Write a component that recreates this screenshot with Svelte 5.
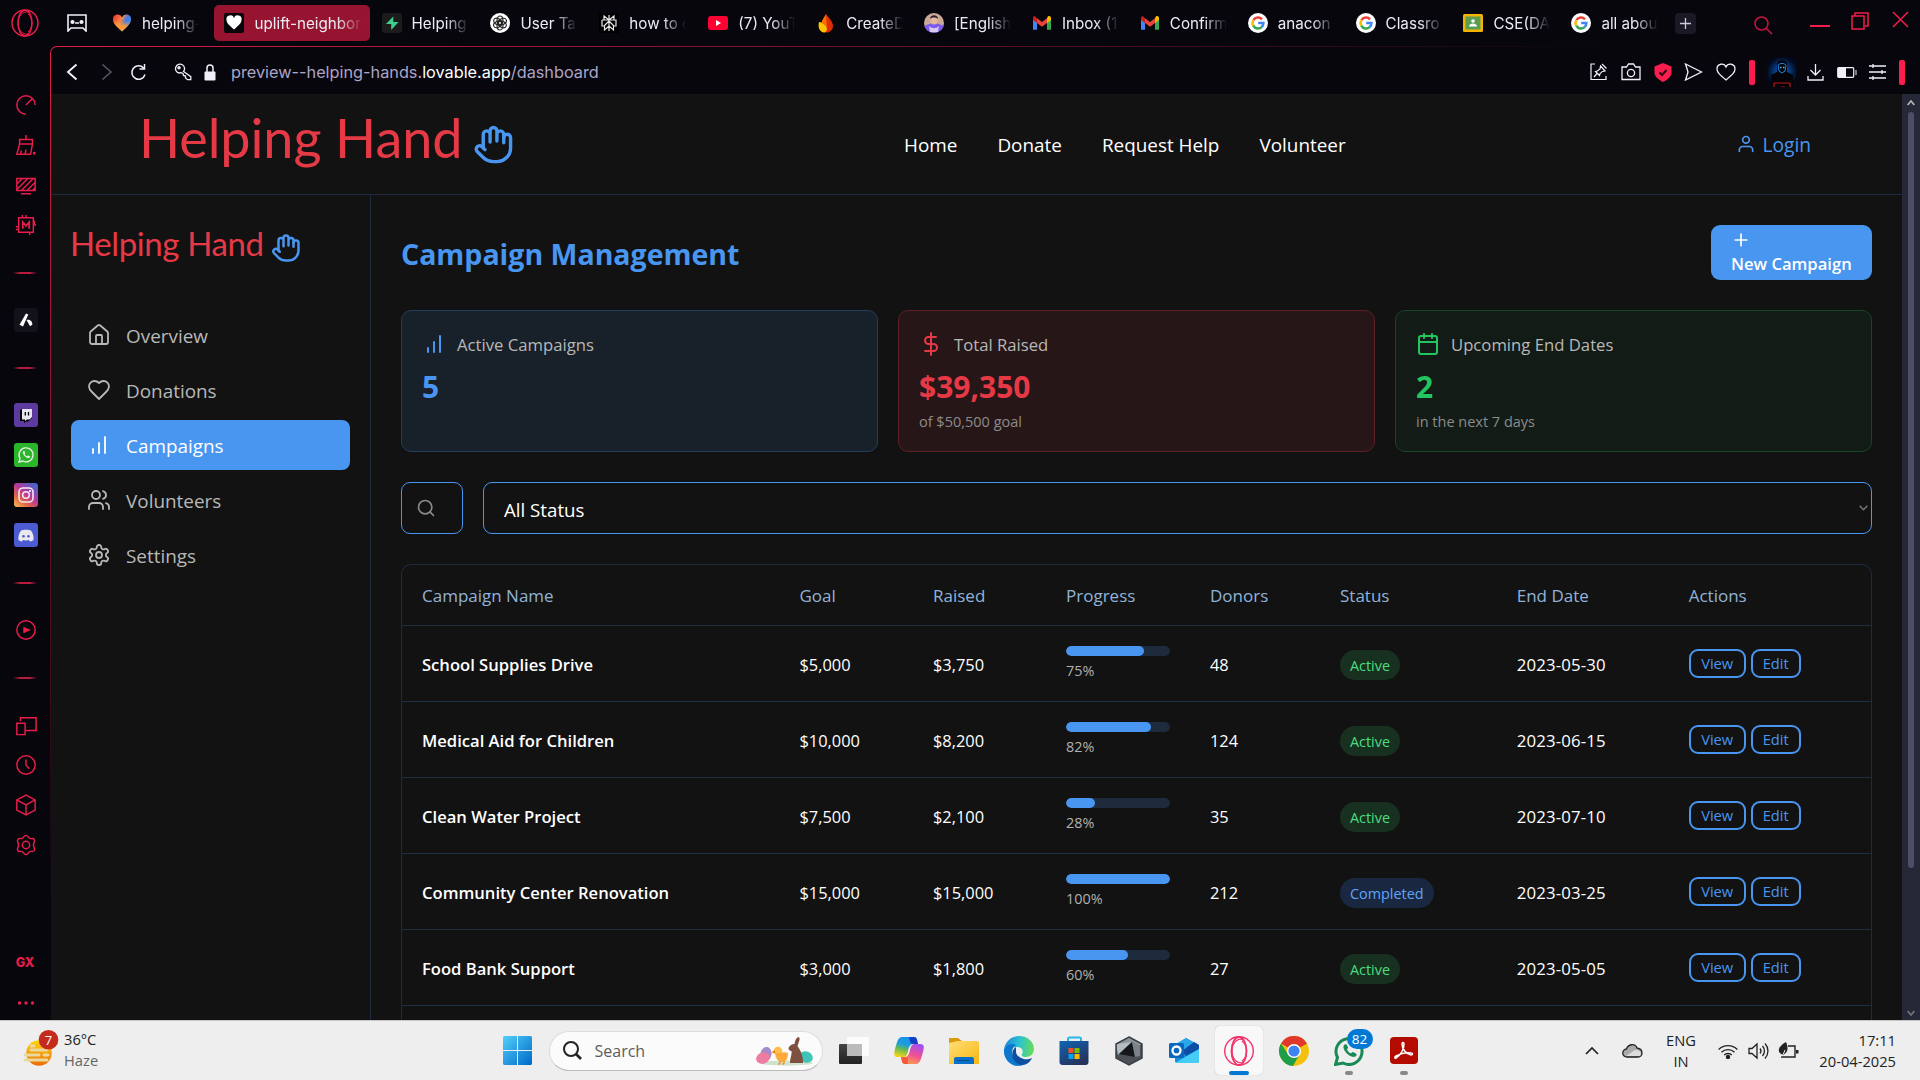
<script>
  const google = '<circle cx="10" cy="10" r="10" fill="#fff"/><g fill="none" stroke-width="2.5"><path d="M5.4 7.2A5.4 5.4 0 0 1 14 6.3" stroke="#ea4335"/><path d="M5.3 7.3a5.4 5.4 0 0 0 0 5.4" stroke="#fbbc05"/><path d="M5.3 12.6a5.4 5.4 0 0 0 8.4 1.5" stroke="#34a853"/><path d="M13.6 14.1a5.4 5.4 0 0 0 1.8-4.1H10.2" stroke="#4285f4"/></g>';
  const gmail = '<path d="M1 4.5v12.3h4V9z" fill="#4285f4"/><path d="M15 9v7.8h4V4.5z" fill="#34a853"/><path d="M15 5.2V10l4-3V5c0-2-2-2.6-3.2-1.6z" fill="#fbbc04"/><path d="M5 5.2V10l5 3.7L15 10V5.2L10 9z" fill="#ea4335"/><path d="M1 5v2l4 3V5.2l-.8-.6C3 2.4 1 3 1 5z" fill="#c5221f"/>';
  const heartPath = 'M10 18.5C4 13 1 10.300 1 6.500a4.700 4.700 0 0 1 9-2.200a4.700 4.700 0 0 1 9 2.200c0 3.800-3 6.500-9 12z';
  const tabs = [
    { name: 'helping-', svg: `<defs><linearGradient id="lv" x1="0" y1=".1" x2="1" y2=".6"><stop offset=".1" stop-color="#f0442e"/><stop offset=".45" stop-color="#f08a4b"/><stop offset=".65" stop-color="#4b7be0"/><stop offset="1" stop-color="#3d8ff0"/></linearGradient><linearGradient id="lv2" x1=".5" y1="0" x2=".4" y2="1"><stop offset=".35" stop-color="#ff9a1f" stop-opacity="0"/><stop offset=".7" stop-color="#ff9a3c"/></linearGradient></defs><path d="${heartPath}" fill="url(#lv)"/><path d="${heartPath}" fill="url(#lv2)"/>` },
    { name: 'uplift-neighbor', active: true, svg: '<rect width="20" height="20" rx="2" fill="#09050a"/><path d="M10 16.500C5 12 2.500 10 2.500 7a3.800 3.800 0 0 1 7.500-1.600a3.800 3.800 0 0 1 7.500 1.600c0 3-2.500 5-7.500 9.500z" fill="#fff"/>' },
    { name: 'Helping', svg: '<rect width="20" height="20" rx="3" fill="#1c1c1c"/><path d="M11.300 3.500v5.500h5.200l-7.300 8v-6H4z" fill="#3ecf8e"/>' },
    { name: 'User Tal', svg: '<circle cx="10" cy="10" r="10" fill="#fff"/><g fill="none" stroke="#222" stroke-width="1.100"><ellipse cx="10" cy="7.300" rx="3" ry="4.300" /><ellipse cx="10" cy="7.300" rx="3" ry="4.300" transform="rotate(60 10 10)"/><ellipse cx="10" cy="7.300" rx="3" ry="4.300" transform="rotate(120 10 10)"/><ellipse cx="10" cy="7.300" rx="3" ry="4.300" transform="rotate(180 10 10)"/><ellipse cx="10" cy="7.300" rx="3" ry="4.300" transform="rotate(240 10 10)"/><ellipse cx="10" cy="7.300" rx="3" ry="4.300" transform="rotate(300 10 10)"/></g>' },
    { name: 'how to c', svg: '<rect width="20" height="20" fill="#000"/><path d="M10 2v16M10 7L5 3v4M10 7l5-4v4M3 7h14v6h-2.500M3 7v6h2.500M10 8l-4.500 4.500V17l4.500-4l4.500 4v-4.500L10 8" fill="none" stroke="#e8e8e8" stroke-width="1.200"/>' },
    { name: '(7) YouT', svg: '<rect y="3" width="20" height="14" rx="3" fill="#ff0033"/><path d="M8 7l5 3l-5 3z" fill="#fff"/>' },
    { name: 'CreateD', svg: '<path d="M10 1c4 5 7 8 7 12a6 6 0 0 1-9 5.500C5 14 10 8 10 1z" fill="#dd2c00"/><path d="M3 9c4 0 7 3 8 7c-.5 3-2 3.500-3 3.500C4 19 1.500 15 3 9z" fill="#ffc400"/><path d="M10 1c-2 4-5 7-4 9c3 1 4.500 4 5 6z" fill="#ff6d00"/>' },
    { name: '[English', svg: '<defs><clipPath id="av"><circle cx="10" cy="10" r="10"/></clipPath></defs><g clip-path="url(#av)"><rect width="20" height="20" fill="#c9a996"/><path d="M0 14c4-5 16-5 20 0v6H0z" fill="#7c5cf0"/><ellipse cx="10" cy="7" rx="3.500" ry="4.500" fill="#e8b79b"/><path d="M6 6c0-5 8-5 8 0c-2-2-6-2-8 0z" fill="#2d2030"/><path d="M5 13c3 3 7 3 10 0l-1 6H6z" fill="#d9c8f2"/></g>' },
    { name: 'Inbox (1', svg: gmail },
    { name: 'Confirm', svg: gmail },
    { name: 'anacon', svg: google },
    { name: 'Classro', svg: google },
    { name: 'CSE(DA', svg: '<rect x="0" y="1" width="20" height="18" rx="1.500" fill="#f4b400"/><rect x="2.500" y="3.500" width="15" height="13" fill="#5b9e52"/><circle cx="10" cy="8" r="1.800" fill="#fff"/><path d="M6 13.500c0-4 8-4 8 0z" fill="#fff"/>' },
    { name: 'all abou', svg: google }
  ];

  const pages = [
    { kind: 'line', svg: '<path d="M12 22A10 10 0 1 1 22 12M12 12l7-7"/>' },
    { kind: 'line', svg: '<path d="M12 1v5M5 6h14v5H5zM5 11L2 22h15l2-11M7 18l-1 4M12 17l-1 5"/><circle cx="21" cy="21" r=".8"/>' },
    { kind: 'line', svg: '<path d="M2 5h20v13H2zM6.500 21.500h11M2 11l6-6M2 17L14 5M7 18L20 5M13 18l9-9M19 18l3-3"/>' },
    { kind: 'line', svg: '<path d="M4 4h16v16H4zM8 1v3M12 1v3M20 12h3M20 8h1v4M1 14h3M1 17h3M16 20v3" /><path d="M8.500 16V9l3.500 4l3.500-4v7" stroke-width="2"/>' },
    { kind: 'rule' },
    { kind: 'app', svg: '<rect width="24" height="24" rx="3" fill="#13121b"/><path d="M12 5.500l2.300 1L9 18.500l-3.500-1.800z" fill="#fff"/><path d="M12.500 12c2-.5 4 0 5 1.500l1 3l-2.500 1.800z" fill="#fff"/>' },
    { kind: 'rule' },
    { kind: 'app', svg: '<rect width="24" height="24" rx="3" fill="#5c3a9e"/><path d="M6 7.500L7.500 6H18v9l-4 3.500h-2l-2 1.500v-2H6z" fill="#000"/><path d="M8 6h10v8l-2.500 2.500H13L11 18v-1.500H8z" fill="#e8e4f0"/><path d="M11.300 9v3.500M14.500 9v3.500" stroke="#000" stroke-width="1.300"/>' },
    { kind: 'app', svg: '<rect width="24" height="24" rx="3" fill="#2bb52b"/><path d="M5 19l1-3.600A7 7 0 1 1 8.700 18z" fill="none" stroke="#e8ece8" stroke-width="1.300"/><path d="M9 8.200c-1.500 2.300 3.800 8.300 6.700 6.600c.8-.8.600-1.300 0-1.600l-1.500-.7c-.8 0-.8.900-1.300.8c-1-.4-1.900-1.300-2.300-2.300c0-.5.800-.7.600-1.300l-.8-1.600c-.5-.4-1-.2-1.400.1z" fill="#e8ece8"/>' },
    { kind: 'app', svg: '<defs><linearGradient id="ig" x1="0" y1="1" x2=".8" y2="0"><stop offset="0" stop-color="#f9c05c"/><stop offset=".3" stop-color="#e4683f"/><stop offset=".6" stop-color="#b8379a"/><stop offset="1" stop-color="#4264cf"/></linearGradient></defs><rect width="24" height="24" rx="3" fill="url(#ig)"/><g fill="none" stroke="#f2e8f0" stroke-width="1.600"><rect x="5" y="5" width="14" height="14" rx="4"/><circle cx="12" cy="12" r="3.300"/></g><circle cx="16" cy="8" r="1" fill="#fff"/>' },
    { kind: 'app', svg: '<rect width="24" height="24" rx="3" fill="#4d5bd3"/><path d="M7 7.500c2-1 8-1 10 0c2 3 3 6 2.500 9.500c-1 .8-2 1.300-3.500 1.500l-1-1.500c-2 .5-4 .5-6 0l-1 1.500c-1.500-.2-2.500-.7-3.500-1.500C4 13.500 5 10.500 7 7.500z" fill="#e9e9ef"/><circle cx="9.500" cy="13.300" r="1.300" fill="#4d5bd3"/><circle cx="14.500" cy="13.300" r="1.300" fill="#4d5bd3"/>' },
    { kind: 'rule' },
    { kind: 'line', svg: '<circle cx="12" cy="12" r="10"/><path d="M9.500 9l7 3l-7 3z" fill="#e81d4a" stroke-width=".8"/>' },
    { kind: 'rule' },
    { kind: 'line', svg: '<path d="M6 8V4h17v14M12 18h12M2 10h9v12.500H2z"/>' },
    { kind: 'line', svg: '<circle cx="12" cy="12" r="10"/><path d="M12 6v6l3.500 4"/>' },
    { kind: 'line', svg: '<path d="M12 1.200l10 5.300v11L12 22.800L2 17.500v-11zM2 6.500L12 12l10-5.500M12 12v11"/>' },
    { kind: 'line', svg: '<path d="M12 1.500c2.200 0 2.300 2.500 4 3.300c1.700.8 3.800-.8 5 1.200c1.300 2.200-.9 3.500-.9 6s2.200 3.800.9 6c-1.200 2-3.300.4-5 1.200c-1.700.8-1.800 3.300-4 3.300s-2.300-2.500-4-3.300c-1.700-.8-3.800.8-5-1.200C1.700 15.800 3.900 14.500 3.900 12S1.700 8.200 3 6c1.200-2 3.300-.4 5-1.200c1.700-.8 1.800-3.300 4-3.300z"/><circle cx="12" cy="12" r="4"/>' }
  ];

  const bars = '<path d="M12 20V10M18 20V4M6 20v-4"/>';
  const hand = '<path d="M18 11V6a2 2 0 0 0-4 0M14 10V4a2 2 0 0 0-4 0v2M10 10.500V6a2 2 0 0 0-4 0v8"/><path d="M18 8a2 2 0 1 1 4 0v6a8 8 0 0 1-8 8h-2c-2.800 0-4.500-.86-5.990-2.340l-3.600-3.600a2 2 0 0 1 2.830-2.820L7 15"/>';
  const menu = [
    { name: 'Overview', svg: '<path d="M15 21v-8a1 1 0 0 0-1-1h-4a1 1 0 0 0-1 1v8"/><path d="M3 10a2 2 0 0 1 .709-1.528l7-5.999a2 2 0 0 1 2.582 0l7 5.999A2 2 0 0 1 21 10v9a2 2 0 0 1-2 2H5a2 2 0 0 1-2-2z"/>' },
    { name: 'Donations', svg: '<path d="M19 14c1.490-1.460 3-3.210 3-5.500A5.500 5.500 0 0 0 16.500 3c-1.760 0-3 .5-4.500 2c-1.500-1.500-2.740-2-4.500-2A5.500 5.500 0 0 0 2 8.500c0 2.300 1.500 4.050 3 5.500l7 7Z"/>' },
    { name: 'Campaigns', svg: bars, active: true },
    { name: 'Volunteers', svg: '<path d="M16 21v-2a4 4 0 0 0-4-4H6a4 4 0 0 0-4 4v2M22 21v-2a4 4 0 0 0-3-3.870M16 3.130a4 4 0 0 1 0 7.750"/><circle cx="9" cy="7" r="4"/>' },
    { name: 'Settings', svg: '<path d="M12.220 2h-.44a2 2 0 0 0-2 2v.18a2 2 0 0 1-1 1.730l-.43.250a2 2 0 0 1-2 0l-.15-.08a2 2 0 0 0-2.730.730l-.220.380a2 2 0 0 0 .730 2.730l.150.100a2 2 0 0 1 1 1.720v.510a2 2 0 0 1-1 1.740l-.150.090a2 2 0 0 0-.730 2.730l.220.380a2 2 0 0 0 2.730.730l.150-.080a2 2 0 0 1 2 0l.430.250a2 2 0 0 1 1 1.730V20a2 2 0 0 0 2 2h.440a2 2 0 0 0 2-2v-.180a2 2 0 0 1 1-1.730l.430-.250a2 2 0 0 1 2 0l.150.080a2 2 0 0 0 2.730-.730l.220-.390a2 2 0 0 0-.730-2.730l-.150-.080a2 2 0 0 1-1-1.740v-.500a2 2 0 0 1 1-1.740l.150-.090a2 2 0 0 0 .730-2.730l-.220-.380a2 2 0 0 0-2.730-.730l-.150.080a2 2 0 0 1-2 0l-.430-.250a2 2 0 0 1-1-1.730V4a2 2 0 0 0-2-2z"/><circle cx="12" cy="12" r="3"/>' }
  ];

  const stats = [
    { tone: 'blue', label: 'Active Campaigns', value: '5', note: '', svg: bars },
    { tone: 'red', label: 'Total Raised', value: '$39,350', note: 'of $50,500 goal', svg: '<path d="M12 1v22M17 5H9.500a3.500 3.500 0 0 0 0 7h5a3.500 3.500 0 0 1 0 7H6"/>' },
    { tone: 'green', label: 'Upcoming End Dates', value: '2', note: 'in the next 7 days', svg: '<path d="M8 2v4M16 2v4M3 10h18"/><rect x="3" y="4" width="18" height="18" rx="2"/>' }
  ];

  const columns = ['Campaign Name', 'Goal', 'Raised', 'Progress', 'Donors', 'Status', 'End Date', 'Actions'];
  const campaigns = [
    { name: 'School Supplies Drive', goal: '$5,000', raised: '$3,750', pct: 75, donors: 48, status: 'Active', end: '2023-05-30' },
    { name: 'Medical Aid for Children', goal: '$10,000', raised: '$8,200', pct: 82, donors: 124, status: 'Active', end: '2023-06-15' },
    { name: 'Clean Water Project', goal: '$7,500', raised: '$2,100', pct: 28, donors: 35, status: 'Active', end: '2023-07-10' },
    { name: 'Community Center Renovation', goal: '$15,000', raised: '$15,000', pct: 100, donors: 212, status: 'Completed', end: '2023-03-25' },
    { name: 'Food Bank Support', goal: '$3,000', raised: '$1,800', pct: 60, donors: 27, status: 'Active', end: '2023-05-05' }
  ];

  const apps = [
    { svg: '<defs><linearGradient id="tv" x1="0" y1="0" x2="0" y2="1"><stop offset="0" stop-color="#444"/><stop offset="1" stop-color="#222"/></linearGradient></defs><rect y="8" width="23" height="20" rx="1" fill="url(#tv)"/><rect x="8" y="1" width="22" height="19" rx="1" fill="#fff" opacity=".8"/><rect x="8" y="8" width="15" height="12" fill="#bbb"/>' },
    { svg: '<defs><linearGradient id="c1" x1=".6" y1="0" x2=".3" y2="1"><stop offset="0" stop-color="#1590f0"/><stop offset=".4" stop-color="#1f9fd8"/><stop offset=".65" stop-color="#6dbb4c"/><stop offset="1" stop-color="#f3d31f"/></linearGradient><linearGradient id="c2" x1=".7" y1="0" x2=".3" y2="1"><stop offset="0" stop-color="#a24ff0"/><stop offset=".5" stop-color="#ee4f97"/><stop offset="1" stop-color="#ffa04d"/></linearGradient></defs><path d="M8 1h12c3 0 3 3 4 7h-5c-3 0-4 3-5 7c-1 4-2 6-5 6H4c-5 0-4-4-3-8C3 6 4 1 8 1z" fill="url(#c1)"/><path d="M15 1h5c3 0 3 3 4 7h-5c-2 0-3-1-3-3z" fill="#153fc4"/><path d="M22 28H11c-3 0-3-3-4-7h4c3 0 4-3 5-7c1-4 2-6 5-6h5c5 0 4 4 3 8c-2 7-3 12-7 12z" fill="url(#c2)"/><path d="M14 28h-3c-3 0-3-3-4-7h4c2 0 3 1 3 3z" fill="#f4593c"/>' },
    { svg: '<defs><linearGradient id="fe" x1="0" y1="0" x2="1" y2="1"><stop offset="0" stop-color="#ffdf76"/><stop offset="1" stop-color="#f9b612"/></linearGradient></defs><path d="M0 2h9l4 3h-3l-3 4H0z" fill="#dd9a08"/><path d="M0 7l9-2h19q2 0 2 2v21H0z" fill="url(#fe)"/><path d="M5 28v-5q0-2 2-2h16q2 0 2 2v5z" fill="#0a6fc8"/><path d="M8 24.500h13" stroke="#084c91"/>' },
    { svg: '<defs><linearGradient id="e1" x1="0" y1=".4" x2="1" y2=".5"><stop offset="0" stop-color="#1b86d8"/><stop offset=".5" stop-color="#2bc3d2"/><stop offset="1" stop-color="#69dc55"/></linearGradient></defs><path d="M0 14C1 5 8 0 15 0c9 0 15 6 15 13c0 5-4 8-8 8c-3 0-5-1-4-3c2-3 0-7-5-7C7 11 1 14 0 20z" fill="url(#e1)"/><path d="M0 15c2-7 8-8 12-6c-4 2-5 8-2 13s8 6 12 5c-2 2-5 3-8 3C6 30 0 23 0 15z" fill="#0c78cd"/><path d="M12 11c-6 3-5 17 6 18c5 0 8-3 10-7c-8 4-16-2-16-6z" fill="#0d4e9f"/>' },
    { svg: '<defs><linearGradient id="st" x1="0" y1="0" x2=".6" y2="1"><stop offset="0" stop-color="#0f65b5"/><stop offset="1" stop-color="#26335b"/></linearGradient></defs><path d="M9 7V3q0-1.500 1.500-1.500h10Q22 1.500 22 3v4" fill="none" stroke="#26b8e8" stroke-width="2"/><path d="M.5 5h29v21q0 3-3 3h-23q-3 0-3-3z" fill="url(#st)"/><path d="M9.500 12H14.500v5H9.500z" fill="#f25022"/><path d="M15.500 12h5v5h-5z" fill="#7fba00"/><path d="M9.500 18h5v5h-5z" fill="#00a4ef"/><path d="M15.500 18h5v5h-5z" fill="#ffb900"/>' },
    { svg: '<path d="M15 1l13 7v14l-13 7l-13-7V8z" fill="#4b5056"/><path d="M15 1l13 7l-3 2l-7-4L3 13l-1-5z" fill="#8d959d"/><path d="M18 6L4 19L2 8z" fill="#b4bbc2"/><path d="M18 6l3 15l-16-3z" fill="#15171a"/><path d="M21 21l-3-15l8 4v10z" fill="#7b828a"/><path d="M15 1l13 7v14l-13 7l-13-7V8z" fill="none" stroke="#3b3f44" stroke-width="1.500"/>' },
    { svg: '<path d="M6 9L17 2l13 7v16q0 2-2 2H8q-2 0-2-2z" fill="#1490df"/><path d="M17 2l12 7l-14 9L5 9z" fill="#28a8ea"/><path d="M30 9v4L17 20l-4-5L25 6z" fill="#0f4da5"/><path d="M30 13v12q0 2-2 2H6z" fill="#45cdf5"/><rect y="7" width="15" height="15" rx="1.500" fill="#0a67bd"/><circle cx="7.500" cy="14.500" r="4" fill="none" stroke="#fff" stroke-width="2.300"/>' },
    { active: true, svg: '<g fill="none" stroke="#f4336a"><circle cx="15" cy="15" r="14.300" stroke-width="1.400"/><ellipse cx="15" cy="15" rx="7.500" ry="14" stroke-width="1.800"/><path d="M19 4c-4-3-11 2-11 11s7 14 11 11M18 5c6 4 6 16 0 20" stroke-width="1.200"/></g>' },
    { svg: '<circle cx="15" cy="15" r="15" fill="#f4c20d"/><path d="M15 15L2 7.500a15 15 0 0 1 26 0z" fill="#e0392b"/><path d="M2 7.500A15 15 0 0 0 14 30l6.500-11.500L9 18z" fill="#1e9e48"/><path d="M28 7.500H15v5z" fill="#e0392b"/><circle cx="15" cy="15" r="7" fill="#fff"/><circle cx="15" cy="15" r="5.600" fill="#3f83f0"/>' },
    { badge: '82', dot: true, svg: '<path d="M1.500 28.500l2-7A13 13 0 1 1 9 27z" fill="#eee" stroke="#178a55" stroke-width="3"/><path d="M10 9c-3 4 6 14 11.500 11.500c1.500-1.500 1.500-2.500 0-3.300L19 16c-1.200 0-1.300 1.500-2.200 1.300c-1.800-.7-3-2-3.800-3.800c0-1 1.400-1.100 1-2.300L12.600 8.600c-.8-.6-1.800-.3-2.600.4z" fill="#178a55"/>' },
    { dot: true, svg: '<rect x="1" y="1" width="28" height="27" rx="4" fill="#b30b00"/><path d="M7 22c5-3 8-9 8-14c0-2-2-2-2 0c0 5 4 10 9 11c2 0 2-2 0-2c-5-1-11 1-15 3c-2 1-1 3 0 2z" fill="none" stroke="#fff" stroke-width="1.500"/>' }
  ];
</script>

{#snippet icon(svg, cls)}
  <svg class="lucide {cls}" viewBox="0 0 24 24">{@html svg}</svg>
{/snippet}

<div class="screen">
  <header class="tabstrip">
    <div class="opera">
      <svg width="28" height="28" viewBox="0 0 28 28" fill="none" stroke="#e81d4a"><circle cx="14" cy="14" r="13" stroke-width="1.500" /><ellipse cx="14" cy="14" rx="7" ry="12.800" stroke-width="1.500" /><path d="M17 3C12 2 7 7 7 14s5 12 10 11M17 5c5 3 5 15 0 18" /></svg>
    </div>
    <div class="pinned">
      <svg width="20" height="18" viewBox="0 0 20 18" fill="none" stroke="#f2f0f8" stroke-width="1.600"><path d="M1 1h18v16l-3-3H4l-3 3zM8 9h4" /><circle cx="5.500" cy="8" r="1.300" fill="#f2f0f8" /><circle cx="14.500" cy="8" r="1.300" fill="#f2f0f8" /></svg>
    </div>
    {#each tabs as t}
      <div class="tab" class:current={t.active}>
        <svg width="20" height="20" viewBox="0 0 20 20">{@html t.svg}</svg>
        <span class="tabname">{t.name}</span>
      </div>
    {/each}
    <div class="addtab"><svg width="11" height="11" viewBox="0 0 11 11"><path d="M5.500 0v11M0 5.500h11" stroke="#cfc9e0" stroke-width="1.300" /></svg></div>
    <div class="winctl">
      <svg class="find" width="19" height="19" viewBox="0 0 19 19"><circle cx="7.500" cy="7.500" r="6.500" /><path d="M12 12l6 6" /></svg>
      <svg class="min" width="20" height="18" viewBox="0 0 20 18"><path d="M0 15h20" stroke-width="2" /></svg>
      <svg class="max" width="18" height="18" viewBox="0 0 18 18"><path d="M4 4V1h13v13h-3M1 4h12v13H1z" /></svg>
      <svg class="cls" width="17" height="17" viewBox="0 0 17 17"><path d="M1 1l15 15M16 1L1 16" /></svg>
    </div>
  </header>

  <div class="middle">
    <aside class="rail">
      {#each pages as p}
        {#if p.kind === 'rule'}
          <div class="rule"><i></i></div>
        {:else}
          <div class="railitem">
            <svg class={p.kind} viewBox="0 0 24 24">{@html p.svg}</svg>
          </div>
        {/if}
      {/each}
      <div class="gx">GX</div>
      <div class="railitem"><svg width="18" height="4" viewBox="0 0 18 4" fill="#e81d4a"><circle cx="2.500" cy="2" r="1.700" /><circle cx="9" cy="2" r="1.700" /><circle cx="15.500" cy="2" r="1.700" /></svg></div>
    </aside>

    <div class="frame">
      <div class="inner">
        <div class="address">
          <svg class="a-back" width="12" height="18" viewBox="0 0 12 18"><path d="M10.500 1.500L2 9l8.500 7.500" stroke-width="1.900" /></svg>
          <svg class="a-fwd" width="12" height="18" viewBox="0 0 12 18"><path d="M1.500 1.500L10 9l-8.500 7.500" /></svg>
          <svg class="a-reload" width="17" height="18" viewBox="0 0 17 18"><path d="M15 11.500A6.700 6.700 0 1 1 13.500 5M14.500 1v5h-5" /></svg>
          <svg class="a-key" width="18" height="18" viewBox="0 0 18 18"><path d="M9.500 8.500A4.500 4.500 0 1 0 5 10l2-.3l2 .8l.5 2l2 .5v2l2 1.700h3.300v-3z" stroke-width="1.300" /><circle cx="5" cy="4.800" r="1" /></svg>
          <svg class="a-lock" width="12" height="17" viewBox="0 0 12 17"><path d="M3 8V4a3 3 0 0 1 6 0v4" /><rect x=".5" y="7.500" width="11" height="9" rx="1" fill="#f2eefa" stroke="none" /></svg>
          <div class="url">preview--helping-hands.<b>lovable.app</b>/dashboard</div>
          <div class="tools">
            <svg width="18" height="18" viewBox="0 0 18 18"><path d="M5 1H1v15.500h15V13M10.500 3l4.500 5l-3 .7l-2 2l-.5 1.800l-4-4l1.800-.5L10 6zM7 10.500L4 14M12 1l4.500 4.500" stroke-width="1.200" /></svg>
            <svg width="20" height="18" viewBox="0 0 20 18"><path d="M1 4h4.500l2-3h5l2 3H19v12.500H1z" stroke-width="1.300" /><circle cx="10" cy="10" r="3.600" stroke-width="1.300" /></svg>
            <svg width="18" height="19" viewBox="0 0 18 19"><path d="M9 0l8.500 3.500v7C17 14 13 17 9 19C5 17 1 14 .5 10.500v-7z" fill="#fa1e4e" stroke="none" /><path d="M5.500 9.500l2.500 2.500l4.500-5" stroke="#2a0712" stroke-width="2" /></svg>
            <svg width="19" height="18" viewBox="0 0 19 18"><path d="M1.500 1l16 8l-16 8l2.500-8z" stroke-width="1.300" /></svg>
            <svg width="20" height="18" viewBox="0 0 20 18"><path d="M10 17C4 12 1 9.500 1 6c0-5.500 7-6.500 9-2c2-4.500 9-3.500 9 2c0 3.500-3 6-9 11z" stroke-width="1.300" /></svg>
            <i class="redbar"></i>
            <svg class="ava" width="30" height="30" viewBox="0 0 30 30"><defs><radialGradient id="pf"><stop offset="0" stop-color="#0d6ae0" /><stop offset="1" stop-color="#02081a" /></radialGradient></defs><rect width="30" height="30" rx="8" fill="url(#pf)" stroke="none" /><path d="M4 30V18l6-3V8c0-6 10-6 10 0v7l6 3v12z" fill="#030308" stroke="none" /><path d="M11 8c2-2 6-2 8 0l-1 6l-3 2l-3-2z" stroke="#1d8be8" stroke-width="1" /><path d="M13 10.500h1.500M16 10.500h1.500" stroke="#5bb8ff" /><path d="M7 26h16M7 30v-4M23 30v-4M14 30h4" stroke="#c4151c" stroke-width="1.200" /></svg>
            <svg width="17" height="18" viewBox="0 0 17 18"><path d="M8.500 1v10.500M3.500 7l5 5l5-5M1 13v4h15v-4" stroke-width="1.300" /></svg>
            <svg width="20" height="11" viewBox="0 0 20 11"><rect x=".7" y=".7" width="16" height="9.600" rx="1" stroke-width="1.200" /><path d="M1 1h8v9H1z" fill="#f2eefa" stroke="none" /><path d="M19 3v5" stroke-width="1" /></svg>
            <svg width="17" height="18" viewBox="0 0 17 18"><path d="M0 3h17M0 9h17M0 15h17M4 1v4M13 7v4M4 13v4" stroke-width="1.300" /></svg>
            <i class="redbar"></i>
          </div>
        </div>

        <div class="viewport">
          <div class="site">
            <div class="sitehead">
              <div class="brand"><span>Helping Hand</span>{@render icon(hand, 'h-big')}</div>
              <nav>
                <span>Home</span><span>Donate</span><span>Request Help</span><span>Volunteer</span>
              </nav>
              <div class="login">
                {@render icon('<circle cx="12" cy="7" r="4"/><path d="M20 21v-2a4 4 0 0 0-4-4H8a4 4 0 0 0-4 4v2"/>', 's20')}
                <span>Login</span>
              </div>
            </div>
            <div class="sitebody">
              <div class="side">
                <div class="brand small"><span>Helping Hand</span>{@render icon(hand, 'h-small')}</div>
                <div class="menu">
                  {#each menu as m}
                    <div class="item" class:on={m.active}>{@render icon(m.svg, 's24')}<span>{m.name}</span></div>
                  {/each}
                </div>
              </div>
              <main>
                <div class="titlebar">
                  <h1>Campaign Management</h1>
                  <div class="newbtn">
                    {@render icon('<path d="M12 5v14M5 12h14"/>', 's20')}
                    <span>New Campaign</span>
                  </div>
                </div>
                <div class="stats">
                  {#each stats as s}
                    <div class="card {s.tone}">
                      <div class="cardhead">{@render icon(s.svg, 's24')}<span>{s.label}</span></div>
                      <div class="value">{s.value}</div>
                      <div class="note">{s.note}</div>
                    </div>
                  {/each}
                </div>
                <div class="filters">
                  <div class="search">{@render icon('<circle cx="11" cy="11" r="8"/><path d="M21 21l-4.300-4.300"/>', 's20')}</div>
                  <div class="select"><span>All Status</span><svg width="9" height="6" viewBox="0 0 9 6"><path d="M.7.7l3.800 4l3.800-4" fill="none" stroke="#777" stroke-width="1.500" /></svg></div>
                </div>
                <div class="table">
                  <div class="row headrow">
                    {#each columns as c}<div class="th">{c}</div>{/each}
                  </div>
                  {#each campaigns as c}
                    <div class="row">
                      <div class="cell name">{c.name}</div>
                      <div class="cell">{c.goal}</div>
                      <div class="cell">{c.raised}</div>
                      <div class="prog">
                        <div class="track"><div class="fill" style="width: {c.pct}%"></div></div>
                        <span>{c.pct}%</span>
                      </div>
                      <div class="cell">{c.donors}</div>
                      <div class="statuscell"><span class="pill" class:done={c.status === 'Completed'}>{c.status}</span></div>
                      <div class="cell date">{c.end}</div>
                      <div class="acts"><span class="btn view">View</span><span class="btn edit">Edit</span></div>
                    </div>
                  {/each}
                </div>
              </main>
            </div>
          </div>
          <div class="scroll">
            <svg width="8" height="6" viewBox="0 0 8 6"><path d="M.7 5L4 1l3.300 4" fill="none" stroke="#b8b8b8" stroke-width="1.600" /></svg>
            <i></i>
            <svg width="8" height="6" viewBox="0 0 8 6"><path d="M.7 1L4 5l3.300-4" fill="none" stroke="#777" stroke-width="1.600" /></svg>
          </div>
        </div>
      </div>
    </div>
  </div>

  <footer>
    <div class="weather">
      <svg width="36" height="38" viewBox="0 0 36 38">
        <defs><linearGradient id="sun" x1="0" y1="0" x2="0" y2="1"><stop offset="0" stop-color="#ffd60a" /><stop offset="1" stop-color="#ee6a09" /></linearGradient></defs>
        <circle cx="16" cy="22" r="12.800" fill="url(#sun)" />
        <path d="M8 15h3M8 19h16M2 24h14M21 24h4M2 29h22" stroke="#e9d9a0" stroke-width="3" stroke-linecap="round" />
        <circle cx="25.500" cy="8.800" r="9.800" fill="#c42b1c" />
        <text x="25.500" y="13.600" text-anchor="middle" fill="#fff" font-family="Open Sans, sans-serif" font-size="13">7</text>
      </svg>
      <div><p>36°C</p><p class="dim">Haze</p></div>
    </div>
    <svg class="start" width="29" height="29" viewBox="0 0 29 29"><defs><linearGradient id="win" x1="0" y1="0" x2="1" y2="1"><stop offset="0" stop-color="#52d0fb" /><stop offset="1" stop-color="#0068c9" /></linearGradient></defs><path d="M1 0h13v14H0V1zM15 0h13l1 1v13H15zM0 15h14v14H1l-1-1zM15 15h14v13l-1 1H15z" fill="url(#win)" /></svg>
    <div class="tasksearch">
      <svg width="19" height="19" viewBox="0 0 19 19" fill="none" stroke="#222" stroke-width="2"><circle cx="8" cy="8" r="7" /><path d="M13 13l5 5" stroke-width="2.600" /></svg>
      <span>Search</span>
      <svg class="bunny" width="60" height="30" viewBox="0 0 60 30">
        <ellipse cx="31" cy="27" rx="27" ry="2.500" fill="#cfe3cd" />
        <ellipse cx="11" cy="18" rx="5.500" ry="7" transform="rotate(10 11 18)" fill="#a58bc9" /><ellipse cx="8" cy="22" rx="7" ry="5.500" transform="rotate(-20 8 22)" fill="#ee7ba1" />
        <circle cx="23" cy="15" r="4.300" fill="#ffc04c" /><path d="M20 17c4 1 8-2 13 0c0 6-2 9-6 9s-6-3-7-9z" fill="#ffab3c" /><path d="M19.500 14l-3 2.500l4 1z" fill="#ee7d1a" /><path d="M25 25v3h-2M29 25v3h-2" stroke="#ee7d1a" fill="none" />
        <ellipse cx="51" cy="21" rx="7" ry="5.500" transform="rotate(20 51 21)" fill="#3fc4b8" />
        <path d="M33.500 12q2-4 6-4q.5-5 3.500-7q2 0 1.500 3l-2 6c3 4 6 11 5.500 17H35c0-5 2-8 1.500-12q-3-.5-3-3z" fill="#7d5040" />
      </svg>
    </div>
    <div class="apps">
      {#each apps as a}
        <div class="app" class:open={a.active}>
          <svg class="appicon" width="30" height="30" viewBox="0 0 30 30">{@html a.svg}</svg>
          {#if a.badge}<span class="badge">{a.badge}</span>{/if}
          {#if a.active}<i class="under"></i>{/if}
          {#if a.dot}<i class="dot"></i>{/if}
        </div>
      {/each}
    </div>
    <div class="tray">
      <svg class="t-up" width="14" height="9" viewBox="0 0 14 9"><path d="M1 8l6-6l6 6" fill="none" stroke="#222" stroke-width="1.700" /></svg>
      <svg class="t-cloud" width="21" height="15" viewBox="0 0 21 15"><path d="M5 14a4 4 0 0 1-.5-8C6 1 13 0 15 5c7 1 6 9 1 9z" fill="#aaa" stroke="#222" stroke-width="1.300" /><path d="M4 13l9-6c5 0 7 3 5 6z" fill="#ddd" /></svg>
      <div class="lang"><p>ENG</p><p>IN</p></div>
      <svg class="t-wifi" width="20" height="16" viewBox="0 0 20 16" fill="none" stroke="#222" stroke-width="1.400"><path d="M.7 6.500a13 13 0 0 1 18.600 0M3.500 9.300a9.200 9.200 0 0 1 13 0M6.200 12a5.400 5.400 0 0 1 7.600 0" /><circle cx="10" cy="14" r="1.500" fill="#222" /></svg>
      <svg class="t-vol" width="21" height="18" viewBox="0 0 21 18" fill="none" stroke="#222" stroke-width="1.300"><path d="M1 6.500h3L9 2v14l-5-4.500H1zM12 6.500a4 4 0 0 1 0 5M14.500 4a7.500 7.500 0 0 1 0 10M17 1.500a11 11 0 0 1 0 15" /></svg>
      <svg class="t-bat" width="21" height="18" viewBox="0 0 21 18"><path d="M10 4h7v11H3" fill="none" stroke="#222" stroke-width="1.400" /><path d="M18 8h2.500v3.500H18z" fill="#222" /><path d="M8 0c2 5 3 10-3 13c-6-2-6-8 3-13z" fill="#222" /><path d="M2 15q4-2 5-7" fill="none" stroke="#eee" /></svg>
      <div class="clock"><p>17:11</p><p>20-04-2025</p></div>
    </div>
  </footer>
</div>

<style>
  :global(body) { margin: 0; overflow: hidden; background: #07060d; }
  .screen { width: 1920px; height: 1080px; display: flex; flex-direction: column; background: #07060d; font-family: "Open Sans", "Noto Sans", sans-serif; color: #fff; overflow: hidden; }
  .screen :global(svg) { display: block; flex: none; }
  p, h1 { margin: 0; }
  .lucide { fill: none; stroke: currentColor; stroke-width: 2; stroke-linecap: round; stroke-linejoin: round; }
  .s20 { width: 20px; height: 20px; }
  .s24 { width: 24px; height: 24px; }
  .h-big { width: 41px; height: 41px; color: #4896f0; }
  .h-small { width: 30px; height: 30px; color: #4896f0; }

  .tabstrip { height: 46px; display: flex; align-items: center; font: 15.200px Inter, sans-serif; flex: none; }
  .opera { width: 50px; display: flex; justify-content: center; flex: none; }
  .pinned { width: 54px; padding-left: 17px; box-sizing: border-box; flex: none; }
  .tab { width: 107.900px; height: 36px; box-sizing: border-box; padding-left: 8px; display: flex; align-items: center; gap: 10px; flex: none; color: #eceaf4; }
  .tab:nth-child(5), .tab:nth-child(6), .tab:nth-child(7) { width: 108.900px; }
  .tabname { white-space: nowrap; line-height: 24px; padding-top: 1px; -webkit-mask-image: linear-gradient(90deg, #000 34px, transparent 57px); mask-image: linear-gradient(90deg, #000 34px, transparent 57px); }
  .tab.current { width: 156px; margin: 0 4px 0 1.700px; padding-left: 10px; background: #96142f; border-radius: 5px; gap: 11px; }
  .tab.current .tabname { -webkit-mask-image: linear-gradient(90deg, #000 82px, transparent 108px); mask-image: linear-gradient(90deg, #000 82px, transparent 108px); }
  .addtab { width: 21px; height: 21px; margin-left: 4px; border-radius: 4px; background: #1b1926; display: flex; align-items: center; justify-content: center; flex: none; }
  .winctl { margin-left: auto; padding-right: 11px; display: flex; align-items: flex-start; height: 34px; }
  .winctl svg { fill: none; stroke: #f51c4b; stroke-width: 1.500; }
  .find { margin-top: 10px; margin-right: 37px; opacity: .8; }
  .min { margin-top: 5px; margin-right: 21px; }
  .max { margin-top: 6px; margin-right: 23px; }
  .cls { margin-top: 5px; }

  .middle { flex: 1; display: flex; min-height: 0; }
  .rail { width: 50px; padding-top: 39px; box-sizing: border-box; display: flex; flex-direction: column; align-items: center; flex: none; }
  .railitem { width: 50px; height: 40px; padding-left: 1px; box-sizing: border-box; display: flex; align-items: center; justify-content: center; flex: none; }
  .line { width: 22px; height: 22px; fill: none; stroke: #e81d4a; stroke-width: 1.600; }
  .app { position: relative; }
  .railitem .app { width: 24px; height: 24px; }
  .rule { height: 55px; display: flex; align-items: center; flex: none; }
  .rule i { width: 24px; height: 2px; background: linear-gradient(90deg, transparent, #b81b3e 30%, #b81b3e 70%, transparent); }
  .gx { margin-top: 78px; height: 40px; font: 800 12.500px/40px Inter, sans-serif; color: #e81d4a; flex: none; }

  .frame { flex: 1; min-width: 0; padding: 1px 0 0 1px; border-radius: 7px 0 0 0; background: radial-gradient(ellipse 1560px 860px at 0 0, #e01c48, transparent); }
  .inner { height: 100%; background: #07060d; border-radius: 6px 0 0 0; display: flex; flex-direction: column; overflow: hidden; }
  .address { height: 47px; display: flex; align-items: center; padding: 3px 15px 0 15px; box-sizing: border-box; flex: none; }
  .address svg { fill: none; stroke: #f2eefa; stroke-width: 1.500; }
  .a-fwd { margin-left: 23px; opacity: .35; }
  .a-reload { margin-left: 17px; }
  .a-key { margin-left: 27px; }
  .a-lock { margin-left: 12px; }
  .url { margin-left: 15px; font: 16.270px Inter, sans-serif; color: #aca4c6; }
  .url b { font-weight: 400; color: #fff; }
  .tools { margin-left: auto; display: flex; align-items: center; gap: 12.700px; }
  .redbar { width: 6px; height: 25px; border-radius: 2px; background: #fa1e4e; }
  .ava { margin: 0 -3px 0 0; }

  .viewport { flex: 1; display: flex; min-height: 0; background: #121212; }
  .site { flex: 1; display: flex; flex-direction: column; min-width: 0; }
  .sitehead { height: 100px; border-bottom: 1px solid #1d2b3e; display: flex; align-items: center; padding: 0 91px 0 88px; flex: none; }
  .brand { font: 400 54px/60px Lato, sans-serif; letter-spacing: -.1px; color: #e63946; display: flex; align-items: center; white-space: nowrap; width: 375px; }
  .brand span { width: 334px; margin-top: -13px; }
  .brand.small { height: 40px; font-size: 33px; line-height: 40px; width: auto; letter-spacing: -.4px; }
  .brand.small span { width: 201px; margin: -10px 0 0 -1px; }
  nav { display: flex; gap: 40px; margin-left: 390px; font-size: 18.900px; font-weight: 500; padding-top: 1px; }
  .login { margin-left: auto; display: flex; align-items: center; gap: 6px; color: #4896f0; font-size: 19.200px; }
  .sitebody { flex: 1; display: flex; min-height: 0; }
  .side { width: 320px; box-sizing: border-box; border-right: 1px solid #1d2b3e; padding: 33px 20px 0; flex: none; }
  .menu { margin-top: 42px; display: flex; flex-direction: column; gap: 5px; }
  .item { height: 50px; border-radius: 8px; padding-left: 16px; display: flex; align-items: center; gap: 15px; font-size: 18.900px; color: #b8b8b8; }
  .item.on { background: #4896f0; color: #fff; }
  .item .lucide { stroke-width: 1.800; }
  .item span { padding-top: 1px; }

  main { flex: 1; min-width: 0; padding: 30px 30px 0; display: flex; flex-direction: column; overflow: hidden; }
  .titlebar { height: 55px; display: flex; justify-content: space-between; align-items: center; flex: none; }
  h1 { font-size: 28.500px; font-weight: 700; color: #4896f0; line-height: 40px; margin-top: 3px; }
  .newbtn { width: 161px; height: 55px; box-sizing: border-box; border-radius: 9px; background: #4896f0; padding: 5px 0 0 20px; font-weight: 600; font-size: 16.600px; line-height: 28px; white-space: nowrap; }
  .stats { margin-top: 30px; display: grid; grid-template-columns: repeat(3, 1fr); gap: 20px; flex: none; }
  .card { height: 142px; box-sizing: border-box; border: 1px solid; border-radius: 10px; padding: 20px 20px; }
  .cardhead { display: flex; align-items: center; gap: 11px; font-size: 16.700px; line-height: 26px; color: #b8b8b8; }
  .cardhead span { padding-top: 1px; margin-bottom: -1px; }
  .value { font-size: 30px; font-weight: 700; line-height: 40px; margin-top: 10px; }
  .note { font-size: 14.500px; line-height: 20px; margin-top: 5px; color: #8b8b8b; }
  .blue { background: #182029; border-color: #233d5d; }
  .blue .value, .blue .lucide { color: #4896f0; }
  .red { background: #271617; border-color: #5c2025; }
  .red .value, .red .lucide { color: #e63946; }
  .green { background: #121b15; border-color: #174529; }
  .green .value, .green .lucide { color: #22c55e; }
  .filters { margin-top: 30px; display: flex; gap: 20px; flex: none; }
  .search { width: 62px; height: 52px; box-sizing: border-box; border: 1px solid #4896f0; border-radius: 9px; padding-left: 14px; display: flex; align-items: center; color: #8a8a8a; }
  .select { flex: 1; box-sizing: border-box; border: 1px solid #4896f0; border-radius: 9px; padding: 0 3px 0 20px; display: flex; align-items: center; justify-content: space-between; font-size: 18.700px; }
  .select span { padding-top: 2px; }
  .table { margin-top: 30px; border: 1px solid #1d2b3e; border-radius: 10px 10px 0 0; border-bottom: 0; flex: 1; }
  .row { display: grid; grid-template-columns: 377.500px 133.500px 133px 144px 130px 176.700px 172px 1fr; padding-left: 20px; height: 75px; border-bottom: 1px solid #1f2f42; align-items: center; font-size: 16.400px; white-space: nowrap; }
  .cell { padding-top: 2px; }
  .headrow { height: 60px; color: #91b2d8; font-weight: 500; font-size: 17px; }
  .name { font-weight: 600; font-size: 16.600px; }
  .date { font-size: 16.800px; letter-spacing: .15px; }
  .prog { font-size: 14.400px; color: #b0b0b0; line-height: 18px; padding-bottom: 2px; }
  .prog span { display: block; margin-top: 6px; }
  .track { width: 104px; height: 10px; border-radius: 5px; background: #1d2b3d; overflow: hidden; }
  .fill { height: 100%; border-radius: 5px; background: #4896f0; }
  .pill { display: inline-block; height: 30px; line-height: 31px; padding: 0 10px; border-radius: 15px; background: #17301f; color: #4ade80; font-size: 14.400px; margin-top: 3px; }
  .pill.done { background: #1a2740; color: #60a5fa; }
  .acts { display: flex; gap: 5px; }
  .btn { height: 29px; box-sizing: border-box; border: 2px solid #4896f0; border-radius: 9px; color: #4896f0; font-size: 14.700px; font-weight: 500; line-height: 25px; text-align: center; }
  .view { width: 57px; }
  .edit { width: 50px; }
  .scroll { width: 18px; background: #252836; display: flex; flex-direction: column; align-items: center; padding: 6px 0 4px; box-sizing: border-box; flex: none; }
  .scroll i { width: 6px; height: 756px; margin: 6px 0 auto; border-radius: 3px; background: #4d4f69; }

  footer { height: 60px; box-sizing: border-box; border-top: 1px solid #c6c6c6; background: #eee; display: flex; align-items: center; color: #222; font-size: 14.700px; flex: none; }
  .weather { width: 503px; padding-left: 23px; box-sizing: border-box; display: flex; align-items: center; gap: 5px; line-height: 20.500px; margin-top: -2px; flex: none; }
  .weather svg { overflow: visible; }
  .dim { color: #666; }
  .tasksearch { width: 274px; height: 40px; box-sizing: border-box; margin-left: 16.500px; border: 1px solid #ddd; border-bottom-color: #bbb; border-radius: 20px; background: #fbfbfb; display: flex; align-items: center; padding: 0 7px 0 13px; font-size: 16px; color: #5c5c5c; flex: none; }
  .tasksearch span { margin-left: 13px; }
  .bunny { margin-left: auto; }
  .apps { display: flex; margin-left: 7px; gap: 7px; }
  .app { height: 49px; display: flex; align-items: center; justify-content: center; }
  .apps .app { width: 48px; }
  .app.open { background: #f8f8f8; border-radius: 5px; box-shadow: 0 0 1px #aaa; }
  .badge { position: absolute; left: 22px; top: 3px; width: 26px; height: 20px; border-radius: 10px; background: #0078d4; color: #fff; line-height: 20px; font-size: 13.500px; text-align: center; }
  .under { position: absolute; bottom: 0; left: 14px; width: 20px; height: 4px; border-radius: 2px; background: #0078d4; }
  .dot { position: absolute; bottom: 0; left: 20px; width: 8px; height: 4px; border-radius: 2px; background: #888; }
  .tray { margin-left: auto; display: flex; align-items: center; padding-right: 24px; line-height: 20.500px; }
  .t-cloud { margin-left: 23px; }
  .lang { width: 30px; margin-left: 23px; text-align: center; display: flex; flex-direction: column; align-items: center; }
  .t-wifi { margin-left: 22px; }
  .t-vol { margin-left: 10px; }
  .t-bat { margin-left: 9px; }
  .clock { width: 80px; margin-left: 17px; text-align: right; white-space: nowrap; }
</style>
